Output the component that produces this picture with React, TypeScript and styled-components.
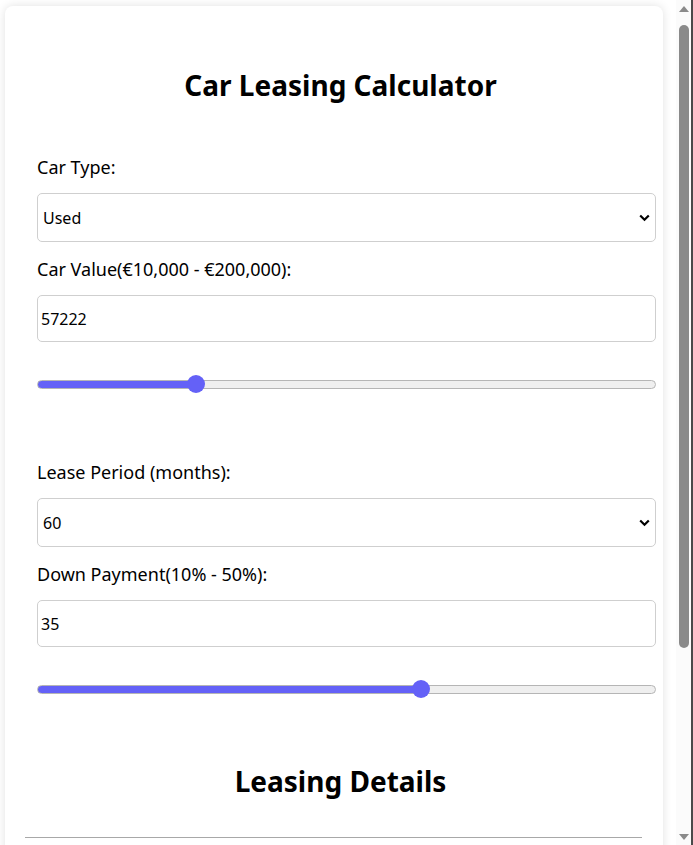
import React, { useState } from "react";
import styled, { createGlobalStyle } from "styled-components";

const FONT = `"Noto Sans", "Open Sans", Arial, sans-serif`;
const ACCENT = "#6461f7";

const GlobalStyle = createGlobalStyle`
  html, body {
    margin: 0;
    padding: 0;
    background: #ffffff;
    font-family: ${FONT};
    color: #000;
  }
`;

const Page = styled.div`
  padding: 6px 0 20px 5px;
`;

const Card = styled.div`
  width: 658px;
  box-sizing: border-box;
  padding: 20px;
  background: #fff;
  border-radius: 8px;
  box-shadow: 0 0 10px rgba(0, 0, 0, 0.12);
`;

const Title = styled.h2`
  margin: 40px -13px 0 0;
  font-size: 28px;
  line-height: 38px;
  font-weight: 700;
  text-align: center;
`;

const Form = styled.div`
  display: flex;
  flex-direction: column;
  margin: 0 -13px 0 12px;
`;

const Group = styled.div<{ $top: number }>`
  display: flex;
  flex-direction: column;
  margin-top: ${(p) => p.$top}px;
`;

const Label = styled.label`
  display: block;
  font-size: 18px;
  line-height: 24px;
  margin-bottom: 14px;
`;

const SelectWrap = styled.div`
  position: relative;
`;

const Select = styled.select`
  appearance: none;
  -webkit-appearance: none;
  width: 100%;
  height: 49px;
  box-sizing: border-box;
  padding: 0 30px 0 5px;
  border: 1px solid #cfcfcf;
  border-radius: 5px;
  background: #fff;
  font-family: ${FONT};
  font-size: 16px;
  color: #000;
  outline: none;
`;

const Chevron = styled.svg`
  position: absolute;
  right: 6px;
  top: 21px;
  width: 11px;
  height: 8px;
  pointer-events: none;
`;

const TextInput = styled.input`
  width: 100%;
  height: 47px;
  box-sizing: border-box;
  padding: 0 3px;
  border: 1px solid #cfcfcf;
  border-radius: 5px;
  font-family: ${FONT};
  font-size: 16px;
  color: #000;
  outline: none;
`;

const Range = styled.input`
  -webkit-appearance: none;
  appearance: none;
  width: 100%;
  height: 18px;
  margin: 33px 0 0;
  background: transparent;
  outline: none;

  &::-webkit-slider-runnable-track {
    height: 9px;
    border-radius: 5px;
    box-sizing: border-box;
    border: 1px solid #b5b5b5;
    background: var(--track);
  }
  &::-webkit-slider-thumb {
    -webkit-appearance: none;
    width: 18px;
    height: 18px;
    margin-top: -5.5px;
    border-radius: 50%;
    background: ${ACCENT};
    border: none;
  }
`;

const SubTitle = styled.h3`
  margin: 64px -13px 0 0;
  font-size: 28px;
  line-height: 38px;
  font-weight: 700;
  text-align: center;
`;

const Divider = styled.hr`
  margin: 37px 0 0;
  border: none;
  border-top: 1px solid #a8a8a8;
  width: 617px;
`;

const Details = styled.div`
  padding-top: 14px;
`;

const DetailRow = styled.div`
  display: flex;
  justify-content: space-between;
  padding: 14px 12px;
  border-bottom: 1px solid #e2e2e2;
  font-size: 18px;
`;

const DetailValue = styled.span`
  font-weight: 700;
`;

/* Fake window scrollbar, drawn over the right edge of the viewport */
const ScrollRail = styled.div`
  position: fixed;
  top: 0;
  right: 0;
  width: 17px;
  height: 100vh;
  box-sizing: border-box;
  border-right: 2px solid #4a4a4a;
  background: #fbfbfb;
  display: flex;
  flex-direction: column;
  align-items: flex-start;
  z-index: 10;
`;

const ArrowBox = styled.div`
  width: 15px;
  height: 17px;
  display: flex;
  align-items: center;
  justify-content: center;
  flex: none;
`;

const RailTrack = styled.div`
  flex: 1;
  width: 15px;
  display: flex;
  justify-content: center;
  align-items: flex-start;
`;

const Thumb = styled.div`
  margin-top: 8px;
  width: 10px;
  height: 623px;
  border-radius: 5px;
  background: #8a8a8a;
`;

function trackBg(value: number, min: number, max: number) {
  const pct = ((value - min) / (max - min)) * 100;
  return `linear-gradient(to right, ${ACCENT} 0%, ${ACCENT} ${pct}%, #efefef ${pct}%, #efefef 100%)`;
}

const ChevronIcon = () => (
  <Chevron viewBox="0 0 11 8">
    <path d="M1.2 1.5 L5.5 5.8 L9.8 1.5" fill="none" stroke="#000" strokeWidth="2.2" />
  </Chevron>
);

export default function App() {
  const [carType, setCarType] = useState("Used");
  const [carValue, setCarValue] = useState(57222);
  const [period, setPeriod] = useState("60");
  const [down, setDown] = useState(35);

  const rate = carType === "New" ? 0.0299 : 0.037;
  const downAmount = (carValue * down) / 100;
  const financed = carValue - downAmount;
  const months = Number(period);
  const r = rate / 12;
  const monthly = (financed * r) / (1 - Math.pow(1 + r, -months));
  const total = monthly * months + downAmount;
  const fmt = (n: number) => `€${n.toFixed(2)}`;

  return (
    <>
      <GlobalStyle />
      <Page>
        <Card>
          <Title>Car Leasing Calculator</Title>
          <Form>
            <Group $top={51}>
              <Label>Car Type:</Label>
              <SelectWrap>
                <Select value={carType} onChange={(e) => setCarType(e.target.value)}>
                  <option value="New">New</option>
                  <option value="Used">Used</option>
                </Select>
                <ChevronIcon />
              </SelectWrap>
            </Group>
            <Group $top={15}>
              <Label>Car Value(€10,000 - €200,000):</Label>
              <TextInput
                type="number"
                value={carValue}
                onChange={(e) => setCarValue(Number(e.target.value))}
              />
              <Range
                type="range"
                min={10000}
                max={200000}
                value={carValue}
                onChange={(e) => setCarValue(Number(e.target.value))}
                style={{ ["--track" as string]: trackBg(carValue, 10000, 200000) } as React.CSSProperties}
              />
            </Group>
            <Group $top={67}>
              <Label>Lease Period (months):</Label>
              <SelectWrap>
                <Select value={period} onChange={(e) => setPeriod(e.target.value)}>
                  <option value="12">12</option>
                  <option value="24">24</option>
                  <option value="36">36</option>
                  <option value="48">48</option>
                  <option value="60">60</option>
                </Select>
                <ChevronIcon />
              </SelectWrap>
            </Group>
            <Group $top={15}>
              <Label>Down Payment(10% - 50%):</Label>
              <TextInput
                type="number"
                value={down}
                onChange={(e) => setDown(Number(e.target.value))}
              />
              <Range
                type="range"
                min={10}
                max={50}
                value={down}
                onChange={(e) => setDown(Number(e.target.value))}
                style={{ ["--track" as string]: trackBg(down, 10, 50) } as React.CSSProperties}
              />
            </Group>
          </Form>
          <SubTitle>Leasing Details</SubTitle>
          <Divider />
          <Details>
            <DetailRow>
              <span>Total Leasing Cost:</span>
              <DetailValue>{fmt(total)}</DetailValue>
            </DetailRow>
            <DetailRow>
              <span>Down Payment:</span>
              <DetailValue>{fmt(downAmount)}</DetailValue>
            </DetailRow>
            <DetailRow>
              <span>Monthly Installment:</span>
              <DetailValue>{fmt(monthly)}</DetailValue>
            </DetailRow>
            <DetailRow>
              <span>Interest Rate:</span>
              <DetailValue>{(rate * 100).toFixed(2)}%</DetailValue>
            </DetailRow>
          </Details>
        </Card>
      </Page>
      <ScrollRail aria-hidden="true">
        <ArrowBox>
          <svg width="10" height="6" viewBox="0 0 10 6">
            <path d="M0 6 L5 0 L10 6 Z" fill="#8a8a8a" />
          </svg>
        </ArrowBox>
        <RailTrack>
          <Thumb />
        </RailTrack>
        <ArrowBox>
          <svg width="10" height="6" viewBox="0 0 10 6">
            <path d="M0 0 L5 6 L10 0 Z" fill="#8a8a8a" />
          </svg>
        </ArrowBox>
      </ScrollRail>
    </>
  );
}
